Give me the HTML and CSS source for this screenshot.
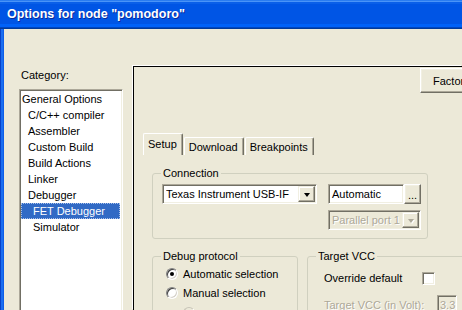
FILE: index.html
```
<!DOCTYPE html>
<html>
<head>
<meta charset="utf-8">
<link rel="stylesheet" href="styles.css">
</head>
<body>
<div class="window">
  <div class="titlebar">Options for node "pomodoro"</div>
  <div class="client">
    <div class="sidebar">
      <div class="cat-label">Category:</div>
      <ul class="list">
        <li class="lvl0">General Options</li>
        <li class="lvl1">C/C++ compiler</li>
        <li class="lvl1">Assembler</li>
        <li class="lvl1">Custom Build</li>
        <li class="lvl1">Build Actions</li>
        <li class="lvl1">Linker</li>
        <li class="lvl1">Debugger</li>
        <li class="lvl2 selected">FET Debugger</li>
        <li class="lvl2">Simulator</li>
      </ul>
    </div>
    <div class="panel">
      <div class="panel-top"><button class="btn factory">Factory Settings</button></div>
      <div class="tabs">
        <div class="tab active">Setup</div>
        <div class="tab">Download</div>
        <div class="tab">Breakpoints</div>
      </div>
      <div class="page">
        <fieldset class="group conn">
          <legend>Connection</legend>
          <div class="conn-body">
            <div class="combo wide"><span class="combo-text">Texas Instrument USB-IF</span><span class="combo-btn"><i class="arrow"></i></span></div>
            <div class="conn-right">
              <div class="edit-row"><div class="edit auto">Automatic</div><button class="btn dots">...</button></div>
              <div class="combo narrow disabled"><span class="combo-text">Parallel port 1</span><span class="combo-btn"><i class="arrow"></i></span></div>
            </div>
          </div>
        </fieldset>
        <div class="groups-row">
          <fieldset class="group debug">
            <legend>Debug protocol</legend>
            <div class="radio-row"><span class="radio checked"></span>Automatic selection</div>
            <div class="radio-row"><span class="radio"></span>Manual selection</div>
            <div class="radio-row sub disabled"><span class="radio"></span></div>
          </fieldset>
          <fieldset class="group vcc">
            <legend>Target VCC</legend>
            <div class="vcc-row"><span class="vcc-label">Override default</span><span class="checkbox"></span></div>
            <div class="vcc-row second disabled"><span class="vcc-label long">Target VCC (in Volt):</span><span class="edit small">3.3</span></div>
          </fieldset>
        </div>
      </div>
    </div>
  </div>
</div>
</body>
</html>
```
FILE: styles.css
```
* { box-sizing: border-box; }
html, body { margin: 0; padding: 0; background: #ECE9D8; }
body {
  font-family: "Liberation Sans", Arial, sans-serif;
  font-size: 11px;
  color: #000;
}
.window {
  width: 462px;
  height: 310px;
  overflow: hidden;
  display: flex;
  flex-direction: column;
}
.titlebar {
  height: 29px;
  flex: none;
  padding: 7px 0 0 7px;
  font-family: "Liberation Sans", Arial, sans-serif;
  font-weight: bold;
  font-size: 12.5px;
  line-height: 15px;
  color: #fff;
  text-shadow: 1px 1px 0 #0A2A9A;
  background: linear-gradient(#2A7CF0 0 1px, #4A94F8 1px 2px, #0A5FE8 2px 4px, #0055E5 4px 24px, #0062F8 24px 27px, #0046C0 27px 28px, #003A9A 28px 29px);
}
.client {
  flex: 1;
  display: flex;
  overflow: hidden;
  background: linear-gradient(to right, #0841C8 0 1px, #1B6EF0 1px 3px, #0D5EE8 3px 4px, #ECE9D8 4px);
  padding-left: 4px;
}
.sidebar {
  width: 129px;
  flex: none;
  padding-left: 15px;
}
.cat-label {
  margin-top: 40px;
  padding-left: 2px;
  line-height: 13px;
}
.list {
  list-style: none;
  margin: 7px 0 0 0;
  width: 104px;
  height: 240px;
  background: #fff;
  border: 1px solid;
  border-color: #ACA899 #fff #fff #ACA899;
  box-shadow: inset 1px 1px 0 #716F64, inset -1px -1px 0 #F1EFE2;
  padding: 1px 2px 1px 1px;
}
.list li {
  height: 16px;
  line-height: 16px;
  white-space: nowrap;
}
.lvl0 { padding-left: 1px; }
.lvl1 { padding-left: 7px; }
.lvl2 { padding-left: 12px; }
.list .selected {
  background: #316AC5;
  color: #fff;
  outline: 1px dotted #A9C1EA;
  outline-offset: -1px;
}
.panel {
  flex: 1;
  margin-top: 37px;
  border-top: 1px solid #000;
  border-left: 1px solid #000;
  box-shadow: -1px -1px 0 #fff;
  min-width: 0;
}
.panel-top {
  height: 26px;
  display: flex;
  align-items: flex-start;
}
.btn {
  font-family: inherit;
  font-size: 11px;
  color: #000;
  background: #ECE9D8;
  border: 1px solid;
  border-color: #fff #716F64 #716F64 #fff;
  box-shadow: inset -1px -1px 0 #ACA899, inset 1px 1px 0 #F1EFE2;
  padding: 0;
  margin: 0;
}
.factory {
  margin: 1px 0 0 286px;
  height: 25px;
  width: 110px;
  flex: none;
  text-align: left;
  padding-left: 12px;
}
.tabs {
  margin-top: 40px;
  height: 22px;
  display: flex;
  align-items: flex-end;
  padding-left: 9px;
}
.tab {
  height: 18px;
  padding: 2px 5px 0 4px;
  line-height: 14px;
  border-top: 1px solid #fff;
  border-left: 1px solid #fff;
  border-right: 1px solid #716F64;
  border-radius: 2px 2px 0 0;
  box-shadow: inset -1px 0 0 #ACA899;
  white-space: nowrap;
}
.tab + .tab { margin-left: 1px; }
.tab.active {
  height: 22px;
  padding-top: 3px;
}
.page {
  padding: 12px 0 0 18px;
}
.group {
  margin: 0;
  border: 1px solid #D0D0BF;
  border-radius: 3px;
  min-width: 0;
}
.group legend {
  padding: 0 2px;
  margin-left: -1px;
  line-height: 13px;
}
.conn {
  width: 276px;
  padding: 4px 6px 8px 9px;
}
.conn-body {
  display: flex;
  gap: 11px;
}
.conn-right {
  width: 93px;
  display: flex;
  flex-direction: column;
  gap: 6px;
}
.combo, .edit {
  height: 20px;
  background: #fff;
  border: 1px solid;
  border-color: #ACA899 #fff #fff #ACA899;
  box-shadow: inset 1px 1px 0 #716F64, inset -1px -1px 0 #F1EFE2;
  display: flex;
  align-items: center;
  white-space: nowrap;
  overflow: hidden;
}
.combo { padding: 1px 1px 1px 3px; }
.combo.wide { width: 155px; }
.combo.narrow { width: 93px; }
.combo-text { flex: 1; overflow: hidden; line-height: 16px; }
.combo-btn {
  width: 17px;
  height: 16px;
  flex: none;
  background: #ECE9D8;
  border: 1px solid;
  border-color: #F1EFE2 #716F64 #716F64 #F1EFE2;
  box-shadow: inset -1px -1px 0 #ACA899, inset 1px 1px 0 #fff;
  display: flex;
  align-items: center;
  justify-content: center;
}
.arrow {
  display: block;
  width: 0;
  height: 0;
  border-left: 3.5px solid transparent;
  border-right: 3.5px solid transparent;
  border-top: 4px solid #000;
  margin-top: 1px;
}
.combo.disabled { background: #ECE9D8; }
.disabled { color: #ACA899; text-shadow: 1px 1px 0 #fff; }
.combo.disabled .arrow { border-top-color: #ACA899; filter: drop-shadow(1px 1px 0 #fff); }
.edit-row { display: flex; }
.edit.auto { width: 76px; padding-left: 3px; }
.dots {
  width: 17px;
  height: 20px;
  line-height: 14px;
  padding-top: 2px;
  font-size: 11px;
}
.groups-row {
  display: flex;
  gap: 9px;
  margin-top: 11px;
}
.debug {
  width: 146px;
  flex: none;
  padding: 1px 6px 8px 9px;
}
.radio-row {
  height: 19px;
  display: flex;
  align-items: center;
  white-space: nowrap;
}
.radio {
  width: 12px;
  height: 12px;
  border-radius: 50%;
  background: #fff;
  border: 1px solid;
  border-color: #808080 #fff #fff #808080;
  box-shadow: inset 1px 1px 0 #404040, inset -1px -1px 0 #D4D0C8;
  margin: 0 5px 0 4px;
  display: flex;
  align-items: center;
  justify-content: center;
  flex: none;
}
.radio.checked::after {
  content: "";
  width: 4px;
  height: 4px;
  border-radius: 50%;
  background: #000;
}
.radio-row.sub { padding-left: 17px; padding-top: 3px; }
.radio-row.disabled .radio { background: #ECE9D8; border-color: #C8C5B8 #fff #fff #C8C5B8; box-shadow: none; }
.vcc {
  width: 170px;
  flex: none;
  padding: 5px 6px 8px 9px;
}
.vcc-row {
  height: 20px;
  display: flex;
  align-items: center;
  white-space: nowrap;
}
.vcc-row.second { margin-top: 7px; }
.vcc-label {
  width: 98px;
  margin-left: 7px;
  flex: none;
}
.vcc-label.long { width: 113px; }
.checkbox {
  width: 13px;
  height: 13px;
  flex: none;
  background: #fff;
  border: 1px solid;
  border-color: #ACA899 #fff #fff #ACA899;
  box-shadow: inset 1px 1px 0 #716F64, inset -1px -1px 0 #F1EFE2;
}
.edit.small {
  width: 20px;
  padding-left: 2px;
  background: #ECE9D8;
  color: #ACA899;
}
```
